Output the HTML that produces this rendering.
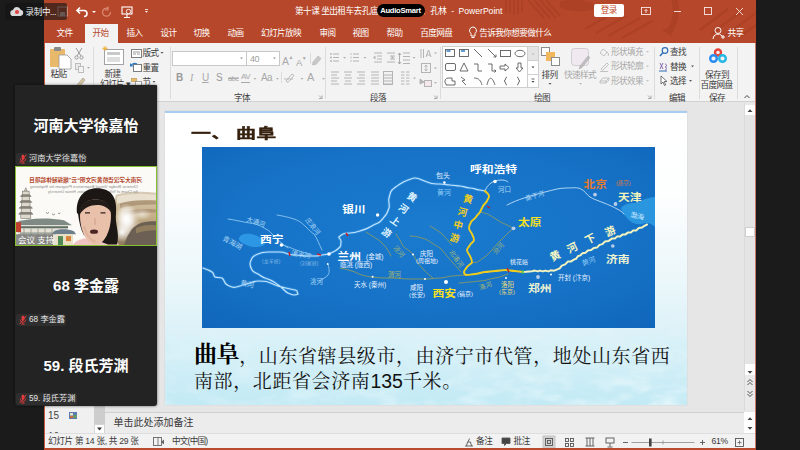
<!DOCTYPE html>
<html lang="zh"><head>
<meta charset="utf-8">
<title>PowerPoint</title>
<style>
*{margin:0;padding:0;box-sizing:border-box}
html,body{width:800px;height:450px;overflow:hidden;background:#1b1b1b;font-family:"Liberation Sans","Noto Sans CJK SC",sans-serif;}
.abs{position:absolute}
#stage{position:absolute;left:0;top:0;width:800px;height:450px;overflow:hidden;background:#1b1b1b}
#ppt{position:absolute;left:44px;top:0;width:712px;height:450px;background:#e6e6e6;overflow:hidden}
#titlebar{position:absolute;left:0;top:0;width:712px;height:43px;background:#b7472a}
.t{position:absolute;white-space:nowrap;line-height:1}
.tab{position:absolute;top:28px;color:#fff;font-size:8.6px;line-height:10px;letter-spacing:-.6px;white-space:nowrap;transform:translateX(-50%)}
#ribbon{position:absolute;left:0;top:43px;width:712px;height:59px;background:#f3f3f3;border-bottom:1px solid #d2d2d2}
.rl{position:absolute;font-size:8.6px;color:#3b3b3b;white-space:nowrap;line-height:10px;letter-spacing:-.6px}
.rl.g{color:#a9a9a9}
.sep{position:absolute;top:6px;width:1px;height:50px;background:#dadada}
#side{position:absolute;left:15px;top:85px;width:142px;height:321px;background:#232323;box-shadow:0 0 3px rgba(0,0,0,.6);border-radius:1px 1px 3px 3px;overflow:hidden}
.nm{position:absolute;left:0;width:142px;text-align:center;color:#fff;font-weight:bold;font-size:15px;line-height:18px;white-space:nowrap}
.lb{position:absolute;left:1px;height:12px;background:#2e2e2e;border-radius:2px;color:#e6e6e6;font-size:8.200px;line-height:12px;padding:0 2px 0 13px;white-space:nowrap}
</style>
</head>
<body>
<div id="stage">
<div id="ppt">
  <div id="titlebar">
    <!-- decorative pattern -->
    <svg class="abs" style="left:0;top:0" width="712" height="43" viewBox="44 0 712 43">
      <g stroke="#a23c22" fill="none" opacity=".5">
        <path d="M506 0v13M510 0v14M514 0v15M518 0v14M522 0v12" stroke-width="2"></path>
        <path d="M528 0l16 18M534 0l16 18M540 0l16 18M546 0l14 16" stroke-width="2.200"></path>
        <path d="M560 2c8-4 22-3 32 1c6 3 3 7-6 8s-22 0-26-4z" fill="#a23c22" stroke="none"></path>
        <path d="M672 -6A37 37 0 0 1 669 32" stroke-width="6"></path><path d="M662 30l9 6l3-10z" fill="#a23c22" stroke="none"></path>
        <path d="M585 29l26-15M596 33l30-17M608 36l32-18M622 38l30-17" stroke-width="2.400"></path>
        <path d="M700 30l28-21M711 34l32-24M723 37l33-24M738 38l18-13" stroke-width="2.400"></path>
      </g>
    </svg>
    <!-- quick access -->
    <svg class="abs" style="left:12px;top:5px" width="110" height="14" viewBox="0 0 110 14">
      <rect x="2" y="2" width="9" height="9" fill="none" stroke="#e9c4b8" stroke-width="1"></rect><rect x="4" y="7" width="5" height="4" fill="#e9c4b8"></rect>
      <path d="M22 4 L19 7 L22 10 M19 7 H26 a3 3 0 0 1 0 6" transform="translate(2 -1.500)" fill="none" stroke="#fff" stroke-width="1.6"></path>
      <path d="M36 6 l2 2 l2 -2z" fill="#fff"></path>
      <path d="M52 3.5 a4 4 0 1 0 2.5 3.5 M52 1.5 v3.5 h-3" fill="none" stroke="#d98a73" stroke-width="1.2"></path>
      <rect x="66" y="2" width="10" height="7" fill="none" stroke="#fff" stroke-width="1.1"></rect><path d="M71 9 v3 M68 12.5 h6" stroke="#fff" stroke-width="1.1"></path><circle cx="72.500" cy="6.500" r="2.200" fill="#b7472a" stroke="#fff" stroke-width=".9"></circle>
      <path d="M89 6 l1.500 1.800 l1.500 -1.800z" fill="#fff"></path><path d="M89 4.500h3" stroke="#fff" stroke-width=".8"></path>
    </svg>
    <div class="t" id="ttl" style="left: 251px; top: 6.5px; color: rgb(255, 255, 255); font-size: 8.6px; letter-spacing: -0.5px; right: auto; width: 112.39px;">第十课 坐出租车去孔庙、孔府</div>
    <div class="t" id="ttl2" style="right: auto; top: 6.5px; color: rgb(255, 255, 255); font-size: 8.6px; letter-spacing: -0.5px; word-spacing: 3px; left: 378.11px; width: 81.59px;">、孔林 - <span style="letter-spacing:0">PowerPoint</span></div>
    <div class="abs" style="left:332.500px;top:3.500px;width:48px;height:13.500px;background:#000;border-radius:7px;color:#fff;font-size:7.600px;font-weight:bold;line-height:13.500px;text-align:center;letter-spacing:-.25px">AudioSmart</div>
    <div class="abs" style="left: 549.5px; top: 4px; width: 30.5px; height: 13px; background: rgb(255, 255, 255); border-radius: 2px; color: rgb(192, 73, 44); font-size: 8.6px; letter-spacing: -0.5px; line-height: 13px; text-align: center; right: auto;">登录</div>
    <svg class="abs" style="left:594px;top:4px" width="112" height="14" viewBox="0 0 112 14">
      <g fill="none" stroke="#fff" stroke-width=".9" opacity=".88">
        <rect x="3.500" y="3.500" width="9" height="7"></rect><path d="M8 9V5.500M6.500 7L8 5.500L9.500 7"></path>
        <path d="M36 7.500h7"></path>
        <rect x="66.500" y="3.500" width="7" height="7"></rect>
        <path d="M98 4l7 7M105 4l-7 7"></path>
      </g>
    </svg>
    <!-- tabs -->
    <div class="abs" style="left:41px;top:24px;width:33px;height:19px;background:#f3f3f3"></div>
    <div class="tab" style="left: 12.58px; transform: none; width: 16.8px; right: auto;">文件</div>
    <div class="tab" style="left: 48.58px; color: rgb(183, 71, 42); transform: none; width: 16.8px; right: auto;">开始</div>
    <div class="tab" style="left: 82.58px; transform: none; width: 16.8px; right: auto;">插入</div>
    <div class="tab" style="left: 116.58px; transform: none; width: 16.8px; right: auto;">设计</div>
    <div class="tab" style="left: 149.58px; transform: none; width: 16.8px; right: auto;">切换</div>
    <div class="tab" style="left: 183.58px; transform: none; width: 16.8px; right: auto;">动画</div>
    <div class="tab" style="left: 216.98px; transform: none; width: 42.02px; right: auto;">幻灯片放映</div>
    <div class="tab" style="left: 275.58px; transform: none; width: 16.8px; right: auto;">审阅</div>
    <div class="tab" style="left: 308.58px; transform: none; width: 16.8px; right: auto;">视图</div>
    <div class="tab" style="left: 342.58px; transform: none; width: 16.8px; right: auto;">帮助</div>
    <div class="tab" style="left: 376.19px; transform: none; width: 33.61px; right: auto;">百度网盘</div>
    <svg class="abs" style="left:424px;top:26px" width="10" height="14" viewBox="0 0 10 14"><path d="M5 1a3.600 3.600 0 0 0-2 6.500V10h4V7.500A3.600 3.600 0 0 0 5 1zM3.500 11.500h3" fill="none" stroke="#fff" stroke-width="1"></path></svg>
    <div class="tab" style="left: 435.19px; transform: none; width: 75.61px; right: auto;">告诉我你想要做什么</div>
    <svg class="abs" style="left:668px;top:26px" width="13" height="14" viewBox="0 0 13 14"><circle cx="6" cy="4.500" r="3" fill="none" stroke="#fff" stroke-width="1"></circle><path d="M1 13a5 5 0 0 1 9-3M9 11h4M11 9v4" fill="none" stroke="#fff" stroke-width="1"></path></svg>
    <div class="tab" style="left: 683.58px; transform: none; width: 16.8px; right: auto;">共享</div>
  </div>
  <div id="ribbon"><div class="abs" style="left:-44px;top:-43px;width:800px;height:450px">
    <svg class="abs" style="left:44px;top:43px" width="712" height="59" viewBox="44 43 712 59">
      <!-- separators -->
      <g stroke="#dcdcdc" stroke-width="1"><path d="M93.500 47v52M170.500 47v52M325.500 47v52M440.500 47v52M654.500 47v52M699.500 47v52M737.500 47v52"></path></g>
      <!-- paste -->
      <rect x="50" y="49" width="15" height="18" rx="1" fill="#e8b96a"></rect><rect x="54" y="47" width="7" height="4" rx="1" fill="#8a8a8a"></rect>
      <path d="M59 55h8l4 4v10h-12z" fill="#fff" stroke="#9a9a9a" stroke-width=".8"></path>
      <!-- cut / copy / painter -->
      <g stroke="#9b9b9b" fill="none" stroke-width="1"><path d="M76 48l5 8M82 48l-5 8"></path><circle cx="76.500" cy="57.500" r="1.600"></circle><circle cx="81.500" cy="57.500" r="1.600"></circle>
      <rect x="75.500" y="63.500" width="5" height="6" fill="#e9e9e9" stroke="#bdbdbd"></rect><rect x="78.500" y="66.500" width="5" height="6" fill="#f3f3f3" stroke="#bdbdbd"></rect></g>
      <path d="M87 67l1.500 1.800l1.500-1.800z" fill="#aaa"></path>
      <path d="M83 78l-6 7l-1 3l3-1l6-7z" fill="#d9c79a" stroke="#9b9b9b" stroke-width=".7"></path>
      <!-- new slide -->
      <rect x="104.500" y="49.500" width="19" height="15" fill="#fff" stroke="#a2a2a2"></rect><rect x="107" y="52" width="13" height="3" fill="#c9c9c9"></rect><rect x="107" y="57" width="13" height="5" fill="#dedede"></rect>
      <path d="M105 46v5M102.500 48.500h5M103.200 46.700l3.600 3.600M106.800 46.700l-3.600 3.600" stroke="#f0b23a" stroke-width=".9"></path>
      <!-- layout, reset, section icons -->
      <rect x="131.500" y="49.500" width="10" height="8" fill="#fff" stroke="#7d7d7d"></rect><path d="M133 52h7M133 54h3M137 54h3" stroke="#9a9a9a" stroke-width="1"></path>
      <rect x="133.500" y="64.500" width="8" height="7" fill="#fff" stroke="#7d7d7d"></rect><path d="M131 66a4 4 0 0 1 6-2" fill="none" stroke="#2f7cc4" stroke-width="1.300"></path><path d="M130 63v3.500h3.500z" fill="#2f7cc4"></path>
      <rect x="131.500" y="78.500" width="5" height="3" fill="#e8b96a" stroke="#b98d3e" stroke-width=".6"></rect><rect x="135.500" y="81.500" width="6" height="4" fill="#fff" stroke="#8c8c8c" stroke-width=".8"></rect>
      <path d="M160.500 52l1.500 1.800l1.500-1.800zM152.500 81l1.500 1.800l1.500-1.800z" fill="#555"></path>
      <!-- font boxes -->
      <rect x="172.500" y="51.500" width="74" height="14" fill="#fff" stroke="#c8c8c8"></rect><rect x="246.500" y="51.500" width="33" height="14" fill="#fff" stroke="#c8c8c8"></rect>
      <path d="M240 57.500l1.500 1.800l1.500-1.800zM273 57.500l1.500 1.800l1.500-1.800z" fill="#9a9a9a"></path>
      <path d="M310.500 53v11M281.500 72v11" stroke="#dcdcdc"></path>
      <path d="M313 62l5-6l3 2.500l-5 6zM313 62l-.5 3l3-.5" fill="#c9c9c9" stroke="#b3b3b3" stroke-width=".6"></path>
      <path d="M253.500 78l1.500 1.800l1.500-1.800zM276 78l1.500 1.800l1.500-1.800zM300.500 78l1.500 1.800l1.500-1.800zM322 78l1.500 1.800l1.500-1.800z" fill="#b0b0b0"></path>
      <path d="M286 81l6-7l2 1.500l-6 7zM284 79l9 0" fill="none" stroke="#b5b5b5" stroke-width=".9"></path>
      <path d="M319 98.500h3v-3M322 98.500l-3-3M434 98.500h3v-3M437 98.500l-3-3M648 98.500h3v-3M651 98.500l-3-3" fill="none" stroke="#9a9a9a" stroke-width=".8"></path>
      <!-- paragraph icons -->
      <g stroke="#b4b4b4" stroke-width="1" fill="none">
        <path d="M333 54h6M333 57.500h6M333 61h6M353 54h6M353 57.500h6M353 61h6"></path>
        <path d="M374 53h8M377 56h5M377 59h5M374 62h8M387 53h8M390 56h5M390 59h5M387 62h8"></path>
        <path d="M403 53h7M403 56.500h7M403 60h7M403 63.500h7"></path>
        <path d="M331 72h8M331 75h6M331 78h8M331 81h6M331 84h8"></path>
        <path d="M344 72h8M345 75h6M344 78h8M345 81h6M344 84h8"></path>
        <path d="M357 72h8M359 75h6M357 78h8M359 81h6M357 84h8"></path>
        <path d="M371 72h8M371 75h8M371 78h8M371 81h8M371 84h8"></path>
        <path d="M384 75h8M384 78h8M384 81h8M384 84h8"></path><rect x="383.500" y="71.500" width="9" height="13"></rect>
        <path d="M401 72h3.500M401 75h3.500M401 78h3.500M401 81h3.500M401 84h3.500M406 72h3.500M406 75h3.500M406 78h3.500M406 81h3.500M406 84h3.500"></path>
        <path d="M421 49v9M423.500 49v9M426 57l2.500-7l2.500 7M427 55h3"></path>
        <rect x="421.500" y="63.500" width="9" height="9"></rect><path d="M426 65v6M424.500 66.500l1.500-1.500l1.500 1.500M424.500 69.500l1.500 1.500l1.500-1.500"></path>
        <rect x="424.500" y="80.500" width="7" height="6" fill="#f4e8ec"></rect><path d="M420 79l4 3l-4 2z" fill="#b4b4b4"></path>
      </g>
      <circle cx="331" cy="54" r=".9" fill="#b4b4b4"></circle><circle cx="331" cy="57.500" r=".9" fill="#b4b4b4"></circle><circle cx="331" cy="61" r=".9" fill="#b4b4b4"></circle>
      <path d="M351 53v2M351 56.500v2M351 60v2" stroke="#b4b4b4" stroke-width=".8"></path>
      <path d="M373 57.500l2.500-2v4zM394 57.500l-2.500-2v4z" fill="#b4b4b4"></path>
      <path d="M399.500 53v11M398 55l1.500-2l1.500 2M398 62l1.500 2l1.500-2" stroke="#9a9a9a" fill="none" stroke-width=".8"></path>
      <path d="M343 57l1.500 1.800l1.500-1.800zM363.500 57l1.500 1.800l1.500-1.800zM412.500 57l1.500 1.800l1.500-1.800zM413 77.500l1.500 1.800l1.500-1.800zM434 52.500l1.500 1.800l1.500-1.800zM434 67.500l1.500 1.800l1.500-1.800zM434 82l1.500 1.800l1.500-1.800z" fill="#b0b0b0"></path>
      <!-- shapes gallery -->
      <rect x="442.500" y="46.500" width="96" height="41" fill="#fff" stroke="#cfcfcf"></rect>
      <path d="M527.500 46.500v41M527.500 60.500h11M527.500 74.500h11" stroke="#cfcfcf" fill="none"></path><rect x="528" y="47" width="10" height="13" fill="#e4e4e4"></rect>
      <path d="M531.500 54.500l1.500-1.800l1.500 1.800z" fill="#bdbdbd"></path><path d="M531.500 66.500l1.500 1.800l1.500-1.800zM531.500 81l1.500 1.800l1.500-1.800z" fill="#444"></path><path d="M531.500 79h3" stroke="#444" stroke-width=".8"></path>
      <g stroke="#5c5c5c" stroke-width=".9" fill="none">
        <rect x="445.500" y="49.500" width="9" height="7"></rect><rect x="459.500" y="49.500" width="9" height="7"></rect>
        <path d="M474 49l8 8M488 49l8 8M496 57v-2.500M496 57h-2.500"></path>
        <rect x="500.500" y="50.500" width="10" height="6"></rect><ellipse cx="520" cy="53.500" rx="5" ry="3.200"></ellipse>
        <rect x="445.500" y="63.500" width="10" height="7" rx="1.500"></rect><path d="M464 63l4 8h-8z"></path>
        <path d="M474 64h4v7h4M488 64h4v7h4M494.500 69.500l1.500 1.500l-1.500 1.500"></path>
        <path d="M500 66h5v-2l4 3.500l-4 3.500v-2h-5zM518 63v5h-2l3.500 4l3.500-4h-2v-5z"></path>
        <path d="M446 84a3.500 3.500 0 0 1 3-6h3v3h3v4h-9z"></path><path d="M461 77l4 3l-3 1l4 4M474 78c5 0 7 3 8 7M487 85c2-9 5-9 8 0"></path>
        <path d="M507 77c-2 0-1 4-3 4c2 0 1 4 3 4M517 77c2 0 1 4 3 4c-2 0-1 4-3 4"></path>
      </g>
      <path d="M446.500 51h4M461 51h4" stroke="#2f7cc4" stroke-width="1.600"></path>
      <!-- arrange -->
      <rect x="541.500" y="47.500" width="8" height="8" fill="#fff" stroke="#8c8c8c"></rect><rect x="546" y="52" width="9" height="9" fill="#f2b85c"></rect><rect x="551.500" y="57.500" width="8" height="8" fill="#fff" stroke="#8c8c8c"></rect>
      <path d="M548.500 83l1.500 1.800l1.500-1.800z" fill="#555"></path><path d="M579 83l1.500 1.800l1.500-1.800z" fill="#b8b8b8"></path>
      <!-- quick styles -->
      <rect x="571.500" y="48.500" width="17" height="17" rx="3" fill="#f1e9f0" stroke="#d2ccd2"></rect><path d="M580 66l8-10l2 1.500l-8 10zM580 66l-1 3l3-1.500" fill="#bdbdbd" stroke="#aaa" stroke-width=".5"></path>
      <!-- shape fill/outline/effects icons -->
      <g stroke="#bcbcbc" fill="none" stroke-width=".9"><path d="M603 49l4 3l-3 4l-4-3zM607 52c1.500 1 2 3 1 4"></path><path d="M601 69l6-6l1.500 1.500l-6 6zM600 71.500h8"></path><path d="M600 81l3-3h6l-3 3zM600 81v2h6v-2M606 83l3-3v-2"></path></g>
      <path d="M646 51l1.500 1.800l1.500-1.800zM646 65.500l1.500 1.800l1.500-1.800zM646 80l1.500 1.800l1.500-1.800z" fill="#c4c4c4"></path>
      <!-- editing icons -->
      <circle cx="665" cy="50.500" r="2.800" fill="none" stroke="#2f6eb5" stroke-width="1.200"></circle><path d="M663 52.500l-3 3.500" stroke="#2f6eb5" stroke-width="1.400"></path>
      <path d="M660 63l3 6M663 63l-3 6M665 64c2 0 2 3 0 3c2 0 2 3 0 3" stroke="#7a5aa8" stroke-width=".9" fill="none"></path><path d="M659 71h8" stroke="#2f6eb5" stroke-width="1"></path>
      <path d="M661 76v8l2-2l1.500 3.500l1.200-.5l-1.500-3.500h2.800z" fill="#fff" stroke="#555" stroke-width=".8"></path>
      <path d="M691 65.500l1.500 1.800l1.500-1.800zM689 80l1.500 1.800l1.500-1.800z" fill="#555"></path>
      <!-- baidu cloud -->
      <g fill="none" stroke-width="2.400"><circle cx="718" cy="52.500" r="3" stroke="#e8453c"></circle><circle cx="713.500" cy="58.500" r="3.300" stroke="#2a8bf2"></circle><circle cx="722.500" cy="58.500" r="3.300" stroke="#23b7e5"></circle></g>
      <path d="M744.500 98l2.500-2.500l2.500 2.500" fill="none" stroke="#444" stroke-width="1"></path>
    </svg>
    <div class="rl" style="left: 50.5px; top: 69px; right: auto; width: 16.81px;">粘贴</div>
    <div class="rl" style="left: 104.5px; top: 69px; right: auto; width: 16.81px;">新建</div>
    <div class="rl" style="left: 100px; top: 79px; right: auto; width: 31.39px;">幻灯片 ▾</div>
    <div class="rl" style="left: 142.5px; top: 48px; right: auto; width: 16.81px;">版式</div>
    <div class="rl" style="left: 142.5px; top: 62.5px; right: auto; width: 16.81px;">重置</div>
    <div class="rl" style="left: 142.5px; top: 77px; right: auto; width: 8.41px;">节</div>
    <div class="rl" style="left:250px;top:53.500px;color:#a0a0a0;font-size:9px">40</div>
    <div class="rl g" style="left:282px;top:50.500px;font-size:10.500px;line-height:12px">A<span style="font-size:5px;vertical-align:6px">▲</span></div>
    <div class="rl g" style="left:296px;top:51.500px;font-size:9.500px;line-height:12px">A<span style="font-size:5px;vertical-align:6px">▼</span></div>
    <div class="rl g" style="left:176px;top:72px;font-size:10px;line-height:12px;font-weight:bold;color:#9a9a9a">B</div>
    <div class="rl g" style="left:190px;top:72px;font-size:10px;line-height:12px;font-style:italic;font-family:'Liberation Serif',serif">I</div>
    <div class="rl g" style="left:202px;top:72px;font-size:10px;line-height:12px;text-decoration:underline">U</div>
    <div class="rl g" style="left:216px;top:72px;font-size:10px;line-height:12px;color:#9a9a9a">S</div>
    <div class="rl g" style="left:228px;top:74px;font-size:7.500px;line-height:10px;text-decoration:line-through">abc</div>
    <div class="rl g" style="left:241px;top:72px;font-size:8px;line-height:10px;border-bottom:1px solid #a9a9a9">AV</div>
    <div class="rl g" style="left:261px;top:72px;font-size:10px;line-height:12px">Aa</div>
    <div class="rl g" style="left:307px;top:71px;font-size:11px;line-height:13px">A</div>
    <div class="rl" style="left: 234px; top: 93px; right: auto; width: 16.81px;">字体</div>
    <div class="rl" style="left: 370px; top: 93px; right: auto; width: 16.81px;">段落</div>
    <div class="rl" style="left: 534px; top: 93px; right: auto; width: 16.81px;">绘图</div>
    <div class="rl" style="left: 669px; top: 93px; right: auto; width: 16.81px;">编辑</div>
    <div class="rl" style="left: 709px; top: 93px; right: auto; width: 16.81px;">保存</div>
    <div class="rl" style="left: 541.5px; top: 69.5px; right: auto; width: 16.81px;">排列</div>
    <div class="rl g" style="left: 564px; top: 69.5px; right: auto; width: 33.61px;">快速样式</div>
    <div class="rl g" style="left: 611px; top: 46.5px; right: auto; width: 33.61px;">形状填充</div>
    <div class="rl g" style="left: 611px; top: 61px; right: auto; width: 33.61px;">形状轮廓</div>
    <div class="rl g" style="left: 611px; top: 75.5px; right: auto; width: 33.61px;">形状效果</div>
    <div class="rl" style="left: 670px; top: 47px; right: auto; width: 16.81px;">查找</div>
    <div class="rl" style="left: 670px; top: 61.5px; right: auto; width: 16.81px;">替换</div>
    <div class="rl" style="left: 670px; top: 75.5px; right: auto; width: 16.81px;">选择</div>
    <div class="rl" style="left: 705px; top: 69.5px; right: auto; width: 25.2px;">保存到</div>
    <div class="rl" style="left: 700.5px; top: 80px; right: auto; width: 33.61px;">百度网盘</div>
  </div></div>
  <!-- SLIDE -->
  <div id="slide" class="abs" style="left:121px;top:111px;width:522px;height:294px;background:linear-gradient(#ffffff 0,#fdfefe 28%,#ebf7fa 58%,#d3eff7 84%,#c2eaf5 100%);border-top:2px solid #a9cdf0;box-shadow:0 0 1px #bbb;overflow:hidden">
  <div class="abs" style="left:-165px;top:-113px;width:800px;height:450px">
    <!-- wave texture -->
    <svg class="abs" style="left:165px;top:300px" width="523" height="105" viewBox="165 300 523 105">
      <defs>
        <filter id="tx" x="0" y="0" width="100%" height="100%"><feTurbulence type="fractalNoise" baseFrequency=".035 .08" numOctaves="3" seed="7" result="n"></feTurbulence><feColorMatrix in="n" type="matrix" values="0 0 0 0 1  0 0 0 0 1  0 0 0 0 1  2.600 0 0 0 -1.050"></feColorMatrix></filter>
        <linearGradient id="wf2" x1="0" y1="0" x2="0" y2="1"><stop offset="0" stop-color="#000"></stop><stop offset=".35" stop-color="#555"></stop><stop offset="1" stop-color="#fff"></stop></linearGradient>
        <linearGradient id="wf3" x1="0" y1="0" x2="1" y2="0"><stop offset="0" stop-color="#777"></stop><stop offset=".6" stop-color="#aaa"></stop><stop offset="1" stop-color="#fff"></stop></linearGradient>
        <mask id="wm"><rect x="165" y="300" width="523" height="105" fill="url(#wf2)"></rect></mask>
        <mask id="wm2"><rect x="165" y="300" width="523" height="105" fill="url(#wf3)"></rect></mask>
      </defs>
      <g mask="url(#wm2)"><rect x="165" y="300" width="523" height="105" filter="url(#tx)" mask="url(#wm)" opacity=".55"></rect></g>
    </svg>
    <div class="t" id="stitle" style="left: 191px; top: 122px; font-family: &quot;Liberation Sans&quot;, &quot;Noto Sans CJK SC&quot;, sans-serif; font-weight: bold; font-size: 20px; line-height: 22px; color: rgb(54, 33, 15); -webkit-text-stroke: 0.5px rgb(54, 33, 15); letter-spacing: 0.3px; transform: scaleY(0.68); transform-origin: 50% 52%;">一、<span style="margin-left:4.400px">曲阜</span></div>
    <svg class="abs" id="map" style="left:202px;top:147px" width="453" height="181" viewBox="202 147 453 181">
      <defs>
        <radialGradient id="mg" cx=".5" cy=".45" r=".75"><stop offset="0" stop-color="#1a7bcf"></stop><stop offset=".6" stop-color="#1672c6"></stop><stop offset="1" stop-color="#1066ba"></stop></radialGradient>
      </defs>
      <rect x="202" y="147" width="453" height="181" fill="url(#mg)"></rect>
      <!-- bohai + qinghai lake -->
      <path d="M621 208c3-4 8-5 14-5c5-1 9-5 20-6v30c-4-4-8-5-13-3c-6 1-11-1-15-6c-3-3-5-6-6-10z" fill="#2a96e0"></path>
      <path d="M239 238c2-5 10-5 16-3s11 6 10 9s-11 4-16 2s-11-4-10-8z" fill="#2c97e4"></path>
      <!-- thin rivers -->
      <g fill="none" stroke="#9bd0f6" stroke-width=".8" stroke-linecap="round" stroke-linejoin="round">
        <path d="M228 219c8 1 14 3 22 4s12 4 16 6s5 4 8 7s8 8 14 12"></path>
        <path d="M277 215c6 1 11 2 17 4s9 5 12 8s6 6 8 7c3 4 5 10 8 16"></path>
        <path d="M282 245c5 1 9 3 14 5s11 3 16 5"></path>
        <path d="M328 264c1 4 2 8 0 11s-6 4-9 6"></path>
        <path d="M507 205c6-3 11-5 17-7s13-4 21-6s14-4 21-4s11-1 15 1s6 6 9 8s9 4 14 6s10 4 13 6c3 1 5 3 7 5" stroke="#d4ecff"></path>
        <path d="M485 191c1-3 3-6 6-8s6-3 11-3c3 0 5 1 6 2" stroke="#d4ecff"></path>
      </g>
      <g fill="none" stroke="#8a9a62" stroke-width=".9" stroke-linecap="round" stroke-linejoin="round">
        <path d="M340 268c5 1 8 2 12 3s6 3 10 4s7 2 10 2c8 1 12 1 18 1s14 1 20 1s11 0 16 0s10-1 14-1s9-2 12-2s9-1 14-1"></path>
        <path d="M396 234c1 3 3 4 4 6s2 5 4 7s6 4 8 6s3 5 4 7s5 7 8 10s6 6 9 8"></path>
        <path d="M410 236c5 0 8 1 12 2s7 3 10 5s6 4 8 5s4 5 7 8s4 5 7 8s5 6 7 8"></path>
        <path d="M514 228c-2 2-4 3-6 5s-3 3-5 5s-4 4-6 6s-3 4-5 6s-4 4-6 6s-5 3-7 5s-4 1-7 2"></path>
        <path d="M459 283c4 0 7-1 11-1s7-1 10-1s7-1 10-2s7-1 10-2s5-2 8-3"></path>
        <path d="M481 212c4 1 7 2 10 4s5 3 8 5s6 3 8 4s4 2 6 3"></path>
        <path d="M430 226c5 3 9 5 13 9s6 7 9 10"></path>
        <path d="M366 232c6 4 12 7 16 11s7 8 9 13"></path>
      </g>
      <!-- Yellow river upper -->
      <path d="M203 268c3 1 6 2 9 4s1 4 3 5s5 0 7 1s2 4 4 6s4 2 6 3s5 0 8-1s7-2 10-3s5-2 8-2s7 0 10 1s7 3 10 4s8 2 12 3s7 1 7 2s1 3 1 3s-2 1-4 1s-4-1-6-2s-4-3-6-5s-5-4-8-6s-6-3-9-4s-5-3-7-4s-5-2-6-4s-2-4-2-6s1-4 2-6s4-3 6-4s6-2 10-2s8 0 12 0s5 1 8 2s5 1 8 1s7 1 10 1s7 0 10 0s4-1 6-1l7-1c2-1 4-2 6-3s4-3 5-4s1-4 1-6s-3-3-2-4s2-2 4-3s5-1 7-1s7-1 10-2s7-2 10-4s5-3 8-4s5-5 7-7s3-5 4-8s-1-7 0-10s1-6 3-8s5-4 8-6s5-3 8-4s5-2 7-2s5 1 7 2s5 2 8 3s7 1 10 1s7 1 10 1s7 1 10 1s6 2 10 2s7 2 10 2l5 1" fill="none" stroke="#4fa8ee" stroke-width="3" opacity=".35" stroke-linecap="round" stroke-linejoin="round"></path>
      <path d="M203 268c3 1 6 2 9 4s1 4 3 5s5 0 7 1s2 4 4 6s4 2 6 3s5 0 8-1s7-2 10-3s5-2 8-2s7 0 10 1s7 3 10 4s8 2 12 3s7 1 7 2s1 3 1 3s-2 1-4 1s-4-1-6-2s-4-3-6-5s-5-4-8-6s-6-3-9-4s-5-3-7-4s-5-2-6-4s-2-4-2-6s1-4 2-6s4-3 6-4s6-2 10-2s8 0 12 0s5 1 8 2s5 1 8 1s7 1 10 1s7 0 10 0s4-1 6-1l7-1c2-1 4-2 6-3s4-3 5-4s1-4 1-6s-3-3-2-4s2-2 4-3s5-1 7-1s7-1 10-2s7-2 10-4s5-3 8-4s5-5 7-7s3-5 4-8s-1-7 0-10s1-6 3-8s5-4 8-6s5-3 8-4s5-2 7-2s5 1 7 2s5 2 8 3s7 1 10 1s7 1 10 1s7 1 10 1s6 2 10 2s7 2 10 2l5 1" fill="none" stroke="#c2e6ff" stroke-width="1.150" stroke-linecap="round" stroke-linejoin="round"></path>
      <!-- middle (yellow) -->
      <path d="M485 191c2 2 4 3 4 5s-1 3-2 5s-3 3-4 5s-2 4-3 6s-3 3-4 5s-4 3-5 5s-2 4-2 6s2 4 3 6s2 4 2 6s-3 3-4 5s-3 3-3 5s2 4 3 6s2 4 2 6s-4 3-5 5s-3 3-3 5s1 3 3 3s5-1 8-1s7-2 10-2s7-1 10-1s7-1 10-1s7 1 10 1l8 1" fill="none" stroke="#f0cc1c" stroke-width="1.900" stroke-linecap="round" stroke-linejoin="round"></path>
      <!-- lower -->
      <path d="M523.0 272.0 L526.0 271.8 L529.0 271.5 L532.0 271.2 L534.8 270.6 L537.8 271.4 L540.0 270.6 L543.0 271.4 L545.2 270.6 L548.2 271.4 L550.8 270.3 L554.2 270.7 L556.8 269.6 L559.7 268.4 L561.8 265.6 L565.2 264.4 L567.8 261.6 L571.2 261.4 L573.8 259.6 L576.2 258.7 L577.8 256.3 L580.2 255.4 L582.5 253.3 L585.5 252.7 L587.8 250.6 L591.2 250.1 L593.8 247.9 L597.2 247.4 L599.5 244.9 L602.5 244.1 L604.8 241.6 L608.7 240.9 L611.8 238.6 L614.9 238.4 L617.1 236.6 L620.2 236.4 L622.5 234.6 L625.5 234.4 L627.8 232.6 L630.9 232.4 L633.1 230.6 L636.2 230.4 L638.8 228.1 L642.2 227.4 L644.5 225.8 L647.0 224.5" fill="none" stroke="#f3f3c0" stroke-width="2" stroke-linecap="round" stroke-linejoin="round"></path>
      <!-- marks -->
      <g stroke-width="1.500" stroke="#c0202a"><path d="M289 252l1 4M317 254l4 1M346 233l2 3M487 206l3 2M507 268l2 4"></path><path d="M523 270v4" stroke="#2fb85a"></path></g>
      <!-- city dots -->
      <g fill="#ffffff"><circle cx="281.500" cy="245" r="1.800"></circle><circle cx="329" cy="254" r="1.800"></circle><circle cx="377.600" cy="215" r="1.700"></circle><circle cx="444.400" cy="182.600" r="1.300"></circle><circle cx="495" cy="181.500" r="1.800"></circle><circle cx="446" cy="282" r="2"></circle><circle cx="413" cy="254.600" r="1"></circle><circle cx="372.600" cy="276.700" r="1"></circle><circle cx="425" cy="279" r="1"></circle><circle cx="327.700" cy="264" r=".9"></circle><circle cx="551" cy="274.600" r="1"></circle><circle cx="506" cy="278" r="1"></circle></g>
      <g fill="#b9cdea"><circle cx="595" cy="194.600" r="1.900"></circle><circle cx="615.500" cy="204" r="1.900"></circle><circle cx="513.500" cy="228.300" r="1.900"></circle><circle cx="612.800" cy="246" r="1.800"></circle><circle cx="538" cy="277" r="1.900"></circle></g>
      <!-- big labels -->
      <g font-family="Liberation Sans, Noto Sans CJK SC, sans-serif" font-weight="bold" font-size="11.800" fill="#fff" transform="scale(1 0.82)">
        <text x="342" y="259.8">银川</text><text x="260" y="296.3">西宁</text><text x="337.500" y="317.1">兰州</text><text x="470" y="211.0">呼和浩特</text>
        <text x="583.500" y="228.7" fill="#e87a2c">北京</text><text x="618" y="245.7" fill="#f4f4ba">天津</text><text x="518" y="275.6" fill="#f5e024">太原</text>
        <text x="606" y="321.3" fill="#eef3d2">济南</text><text x="528" y="356.1" fill="#eef3d2">郑州</text><text x="432.500" y="362.2" fill="#f5e024">西安</text>
      </g>
      <g font-family="Liberation Sans, Noto Sans CJK SC, sans-serif" font-weight="bold" font-size="9.500">
        <g fill="#dff3ff"><text x="407.500" y="200.500" transform="rotate(35 412 197)">黄</text><text x="399" y="212" transform="rotate(35 403.500 208.500)">河</text><text x="390.500" y="224.500" transform="rotate(35 395 221)">上</text><text x="382" y="236" transform="rotate(35 386.500 232.500)">游</text></g>
        <g fill="#f2cf1e"><text x="463.500" y="202.500" transform="rotate(14 468 199)">黄</text><text x="458" y="215.500" transform="rotate(14 462.500 212)">河</text><text x="453.500" y="228.500" transform="rotate(14 458 225)">中</text><text x="450" y="241.500" transform="rotate(14 454.500 238)">游</text></g>
        <g fill="#f6f6c4" font-size="10.500"><text x="550" y="259.500" transform="rotate(-27 555 256)">黄</text><text x="567" y="251.500" transform="rotate(-27 572 248)">河</text><text x="585" y="242.500" transform="rotate(-27 590 239)">下</text><text x="605" y="235" transform="rotate(-27 610 231.500)">游</text></g>
      </g>
      <!-- small labels -->
      <g font-family="Liberation Sans, Noto Sans CJK SC, sans-serif" font-size="6.500" fill="#e8f2ff">
        <text x="436" y="178" font-size="7">包头</text><text x="437" y="195" font-size="7" fill="#8fcdf8">黄河</text><text x="498" y="192" fill="#a8d4f6">河口</text>
        <text x="526" y="201" transform="rotate(-17 526 201)" fill="#a8d4f6">桑干河</text><text x="630" y="217" font-size="7" fill="#cfeaff" transform="rotate(12 630 217)">渤海</text>
        <text x="616" y="185" fill="#e87a2c" font-size="5.500">(燕京)</text>
        <text x="366" y="258.500">(金城)</text><text x="340" y="267">临洮 (陇西)</text><text x="354" y="287">天水 (秦州)</text>
        <text x="420" y="256">庆阳</text><text x="416" y="263" font-size="6">(周祖地)</text><text x="410" y="290">咸阳</text><text x="409" y="297" font-size="6">(长安)</text><text x="457" y="296" font-size="6">(镐京)</text>
        <text x="558" y="279.500">开封 (汴京)</text><text x="501" y="287" fill="#e8dc7a">洛阳</text><text x="499" y="294" font-size="6" fill="#e8dc7a">(东京)</text><text x="510" y="264" font-size="6">桃花峪</text>
        <text x="583" y="266" transform="rotate(-20 583 266)" fill="#8fcdf8" font-size="7">黄河</text>
        <text x="222" y="240" transform="rotate(28 222 240)" fill="#a8d4f6" font-size="7">青海湖</text><text x="240" y="285" transform="rotate(12 240 285)" fill="#a8d4f6" font-size="7">黄河</text>
        <text x="246" y="221" transform="rotate(18 246 221)" fill="#a8d4f6">大通河</text><text x="305" y="220" transform="rotate(52 305 220)" fill="#a8d4f6">庄浪河</text><text x="291" y="255" transform="rotate(10 291 255)" fill="#a8d4f6">湟水河</text>
        <text x="310" y="284" fill="#a8d4f6">洮河</text><text x="388" y="277" fill="#a9b870">渭河</text><text x="393" y="248" transform="rotate(50 393 248)" fill="#a9b870">泾河</text><text x="449" y="252" transform="rotate(55 449 252)" fill="#a9b870">北洛河</text>
        <text x="496" y="255" transform="rotate(-50 496 255)" fill="#a9b870">汾河</text><text x="480" y="290" transform="rotate(-18 480 290)" fill="#a9b870">洛河</text>
        <text x="262" y="263" font-size="5" fill="#7fb6e6">(龙羊峡)</text><text x="300" y="265" font-size="5" fill="#7fb6e6">(刘家峡)</text>
      </g>
    </svg>
    <div class="t kai" id="l1" style="left: 194px; top: 345px; font-family: &quot;Liberation Serif&quot;, &quot;Noto Serif CJK SC&quot;, serif; font-size: 19px; line-height: 22px; color: rgb(20, 20, 20); letter-spacing: 0.6px; right: auto; width: 476.41px;"><b style="font-size:23px;letter-spacing:-.4px;color:#000;position:relative;top:-1px">曲阜</b>，山东省辖县级市，由济宁市代管，地处山东省西</div>
    <div class="t kai" id="l2" style="left: 194px; top: 370px; font-family: &quot;Liberation Serif&quot;, &quot;Noto Serif CJK SC&quot;, serif; font-size: 19px; line-height: 22px; color: rgb(20, 20, 20); letter-spacing: 0.6px; right: auto; width: 267.77px;">南部，北距省会济南<span style="font-family:'Liberation Sans',sans-serif;font-size:19.500px;letter-spacing:0;color:#111">135</span>千米。</div>
  </div>
  </div>
  <!-- editing area scrollbar -->
  <div class="abs" style="left:700px;top:103px;width:11px;height:308px;background:#e9e9e9;border-left:1px solid #dadada"></div>
  <div class="abs" style="left:701px;top:105px;width:10px;height:10px;background:#fff"></div>
  <div class="abs" style="left:701px;top:115px;width:10px;height:249px;background:#e4e4e4"></div>
  <div class="abs" style="left:701px;top:227px;width:10px;height:10px;background:#fff;border:1px solid #cfcfcf"></div>
  <div class="abs" style="left:701px;top:364px;width:10px;height:11px;background:#fff"></div>
  <svg class="abs" style="left:701px;top:103px" width="10" height="308" viewBox="0 0 10 308"><path d="M2.500 9L5 6.200L7.500 9z" fill="#444"></path><path d="M2.500 268L5 270.800L7.500 268z" fill="#444"></path><path d="M2.500 279l2.500-2.500l2.500 2.500M2.500 282l2.500-2.500l2.500 2.500M2.500 288l2.500 2.500l2.500-2.500M2.500 291l2.500 2.500l2.500-2.500" fill="none" stroke="#444" stroke-width=".9"></path></svg>
  <!-- notes -->
  <div class="abs" style="left:0;top:412px;width:712px;height:22px;background:#ececec;border-top:1px solid #d0d0d0"></div>
  <div class="t" style="left: 69.5px; top: 418px; font-size: 10px; color: rgb(56, 56, 56); right: auto; width: 80px;">单击此处添加备注</div>
  <div class="abs" style="left:700px;top:412px;width:11px;height:21px;background:#fff"></div>
  <svg class="abs" style="left:701px;top:412px" width="10" height="21" viewBox="0 0 10 21"><path d="M2.500 8L5 5.200L7.500 8zM2.500 15L5 17.800L7.500 15z" fill="#444"></path></svg>
  <!-- thumbnail pane remnants -->
  <div class="abs" style="left:0;top:103px;width:61px;height:331px;background:#e6e6e6"></div>
  <div class="abs" style="left:0;top:405px;width:50px;height:29px;background:#f0f0f0"></div>
  <div class="abs" style="left:50px;top:405px;width:11px;height:19px;background:#cdcdcd"></div>
  <div class="abs" style="left:50px;top:424px;width:11px;height:10px;background:#fff;border:1px solid #d5d5d5"></div>
  <svg class="abs" style="left:50px;top:424px" width="11" height="10" viewBox="0 0 11 10"><path d="M3 3.500L5.500 6.500L8 3.500z" fill="#333"></path></svg>
  <div class="abs" style="left:61px;top:405px;width:52px;height:7px;background:#e6e6e6"></div>
  <div class="t" style="left:4px;top:411px;font-size:10px;color:#444">15</div>
  <div class="t" style="left:4px;top:431.500px;font-size:10px;color:#444">16</div>
  <svg class="abs" style="left:25px;top:412px" width="8" height="7" viewBox="0 0 8 7"><rect width="8" height="7" fill="#5a7bb0"></rect><rect x="1" y="1" width="3" height="2.500" fill="#e9e3c8"></rect><rect x="4.500" y="3" width="3" height="3" fill="#6aa05a"></rect><rect x="1" y="4" width="3" height="2" fill="#d06a3a"></rect></svg>
  <!-- status bar -->
  <div class="abs" style="left:0;top:433px;width:712px;height:17px;background:#f2f2f2;border-top:1px solid #dedede"></div>
  <div class="t" style="left: 4px; top: 437px; font-size: 8.6px; letter-spacing: -0.3px; color: rgb(58, 58, 58); right: auto; width: 93.44px;" id="st1">幻灯片 第 14 张, 共 29 张</div>
  <svg class="abs" style="left:109px;top:436px" width="12" height="11" viewBox="0 0 12 11"><rect x=".5" y="1.500" width="8" height="8" fill="none" stroke="#666" stroke-width=".9"></rect><path d="M5 1.500v8" stroke="#666" stroke-width=".8"></path><path d="M8 6l3-2.500v5z" fill="#666"></path></svg>
  <div class="t" style="left: 128px; top: 437px; font-size: 8.6px; letter-spacing: -0.8px; color: rgb(58, 58, 58); right: auto; width: 36.94px;">中文(中国)</div>
  <svg class="abs" style="left:416px;top:435px" width="296" height="14" viewBox="460 435 296 14">
    <rect x="543" y="436" width="12" height="12" fill="#d2d2d2" stroke="#bdbdbd" stroke-width=".8"></rect>
    <g fill="none" stroke="#555" stroke-width=".9">
      <path d="M465 446h8M466.500 446l1-4h3l1 4M468 442l1.500-3.500"></path>
      <path d="M502 438h8v5.500h-3.500l-2 2v-2h-2.500z" fill="#444"></path>
      <rect x="545.500" y="438.500" width="7" height="7"></rect><rect x="547.500" y="440.500" width="3" height="3"></rect>
      <rect x="565.500" y="438.500" width="3" height="3"></rect><rect x="570.500" y="438.500" width="3" height="3"></rect><rect x="565.500" y="443.500" width="3" height="3"></rect><rect x="570.500" y="443.500" width="3" height="3"></rect>
      <path d="M587 438v8M590 438v8M593 438v8M585.500 438h9M585.500 446h9"></path>
      <rect x="606" y="438" width="8" height="5"></rect><path d="M610 443v3.500M607.500 447h5"></path>
      <path d="M623 442.500h5M700 442.500h5M702.500 440v5"></path>
    </g>
    <path d="M631.500 442.500h63" stroke="#8a8a8a" stroke-width=".8"></path><path d="M663 440.500v4" stroke="#8a8a8a" stroke-width=".8"></path><rect x="649" y="438.500" width="2.600" height="8" fill="#444"></rect>
    <g fill="none" stroke="#555" stroke-width=".9"><rect x="735.500" y="438.500" width="8" height="8"></rect><path d="M737.500 442.500h4M739.500 440.500v4" stroke-width=".7"></path></g>
  </svg>
  <div class="t" style="left: 432px; top: 437px; font-size: 8.6px; letter-spacing: -0.3px; color: rgb(58, 58, 58); right: auto; width: 17.41px;">备注</div>
  <div class="t" style="left: 469.5px; top: 437px; font-size: 8.6px; letter-spacing: -0.3px; color: rgb(58, 58, 58); right: auto; width: 17.41px;">批注</div>
  <div class="t" style="left:667.500px;top:437px;font-size:8.600px;letter-spacing:-.3px;color:#3a3a3a">61%</div>
  <!-- window border -->
  <div class="abs" style="left:0;top:43px;width:1px;height:407px;background:#c45a3e"></div>
  <div class="abs" style="left:711px;top:43px;width:1px;height:407px;background:#c97a66"></div>
  <div class="abs" style="left:0;top:448px;width:712px;height:2px;background:#bb4b2e"></div>
</div>
<div id="side">
  <div class="nm" style="top: 32px; right: auto; left: 0px; width: 142px;">河南大学徐嘉怡</div>
  <div class="lb" style="top: 68px; right: auto; left: 1px; width: 71px;"><svg class="abs" style="left:2px;top:1px" width="10" height="10" viewBox="0 0 10 10"><rect x="3.600" y=".8" width="2.800" height="5" rx="1.400" fill="#e23b3b"></rect><path d="M2.200 4.500a2.800 2.800 0 0 0 5.600 0M5 7.300v1.700M3.300 9.200h3.400" fill="none" stroke="#e23b3b" stroke-width=".8"></path><path d="M8.300 .8L1.700 9" stroke="#e23b3b" stroke-width="1"></path></svg>河南大学徐嘉怡</div>
  <svg class="abs" style="left:0;top:80.500px" width="142" height="80" viewBox="15 165 142 81" preserveAspectRatio="none">
    <defs>
      <linearGradient id="wfl" x1="0" y1="0" x2="0" y2="1"><stop offset="0" stop-color="#d9cdb8"></stop><stop offset=".45" stop-color="#c7b08a"></stop><stop offset="1" stop-color="#8f7a5e"></stop></linearGradient>
      <radialGradient id="mist" cx=".5" cy=".5" r=".5"><stop offset="0" stop-color="#fff" stop-opacity=".95"></stop><stop offset="1" stop-color="#fff" stop-opacity="0"></stop></radialGradient>
    </defs>
    <rect x="15" y="165" width="142" height="81" fill="#86c030"></rect>
    <rect x="16" y="166" width="140" height="79" fill="#fbfaf6"></rect>
    <!-- waterfall right -->
    <path d="M116 194c10-3 24-4 40-2v53h-42c1-8-1-18 0-28s0-17 2-23z" fill="url(#wfl)"></path>
    <path d="M117 196c10-3 24-3 39-2v6c-14-1-28 0-39 3z" fill="#e9e0cf"></path>
    <path d="M120 203c9-3 22-4 36-3v4c-13 0-26 1-36 4zM124 211c9-2 20-3 32-2v3c-12 0-22 1-32 3z" fill="#a58c6e" opacity=".75"></path>
    <ellipse cx="127" cy="220" rx="13" ry="17" fill="url(#mist)"></ellipse><ellipse cx="126" cy="218" rx="10" ry="15" fill="url(#mist)"></ellipse><ellipse cx="122" cy="232" rx="10" ry="10" fill="url(#mist)"></ellipse><ellipse cx="142" cy="214" rx="10" ry="6" fill="url(#mist)" opacity=".6"></ellipse>
    <path d="M130 232c4-8 14-12 26-11v24h-32c2-5 3-9 6-13z" fill="#6b6053"></path>
    <path d="M136 228c5-3 12-4 20-3v5c-8 0-14 1-20 3z" fill="#9a8560" opacity=".8"></path>
    <!-- mirrored banner text -->
    <g transform="translate(172 0) scale(-1 1)">
    <text x="30" y="181.300" font-family="Liberation Sans, Noto Sans CJK SC, sans-serif" font-weight="bold" font-size="5.650" fill="#b4482e">河南大学汉语桥黄河文明“云”端探秘体验项目</text>
    <text x="34" y="187.400" font-family="Liberation Sans, sans-serif" font-size="3.900" fill="#8c8c8c" textLength="108" lengthAdjust="spacingAndGlyphs">Chinese Bridge Virtual Experience Program for Exploring</text>
    <text x="34" y="192.200" font-family="Liberation Sans, sans-serif" font-size="3.900" fill="#8c8c8c" textLength="90" lengthAdjust="spacingAndGlyphs">the Charm of Yellow River Civilization, Henan University</text>
    </g>
    <!-- pagoda -->
    <g fill="#dcd8cc" stroke="#6e6a62" stroke-width=".55">
      <path d="M25.800 187l1.400 3.500h-2.800z"></path><rect x="22.500" y="190.500" width="6.600" height="4"></rect><path d="M20.500 195.800h10.600l-1.300-1.600h-8z" fill="#8e8a80"></path><rect x="22" y="195.800" width="7.600" height="4.600"></rect><path d="M19.800 201.800h12l-1.300-1.600h-9.400z" fill="#8e8a80"></path><rect x="21.600" y="201.800" width="8.400" height="4.600"></rect><path d="M19.200 207.800h13.200l-1.300-1.600h-10.600z" fill="#8e8a80"></path><rect x="21.200" y="207.800" width="9.200" height="4.600"></rect><path d="M18.700 213.800h14.200l-1.300-1.600h-11.600z" fill="#8e8a80"></path><rect x="20.800" y="213.800" width="10" height="4.400"></rect>
    </g>
    <path d="M46 212l1.500 1l1.500-1M52 213.500l1.500 1l1.500-1M58 212.500l1.200.8l1.200-.8" stroke="#4a4a4a" stroke-width=".6" fill="none"></path>
    <!-- gate building -->
    <path d="M16 222c12-4 30-5 48-2l8 5h-56z" fill="#7f8a84"></path>
    <rect x="18" y="225" width="50" height="20" fill="#e4e1d6"></rect>
    <path d="M18 226h50v2h-50z" fill="#5f6e66"></path>
    <g stroke="#a7a49a" stroke-width="1"><path d="M24 228v17M31 228v17M38 228v17M45 228v17M52 228v17"></path></g>
    <path d="M20 233h46" stroke="#8a948c" stroke-width="1.200"></path>
    <rect x="16" y="222" width="5" height="10" fill="#c2402e"></rect>
    <path d="M54 231c5-2.500 13-2.500 20 0l2 3h-24z" fill="#6d7f8c"></path><rect x="56" y="234" width="17" height="11" fill="#e9dfc4"></rect><rect x="58" y="236" width="5" height="9" fill="#4f8a56"></rect><rect x="66" y="236" width="5" height="5" fill="#d7813a"></rect>
    <!-- person -->
    <path d="M73 245c2-4 7-6 12-6.500h22c5 .5 10 2.500 12 6.500z" fill="#efc3c2"></path>
    <path d="M77 213c-1.500-15 6.500-25.500 20-25.500s20.500 8.500 19 25c-.5 5 0 10 1 15s1.500 11 0 17h-9l-24-9.500c-3.500-6-5-14-6-22z" fill="#1c1715"></path>
    <path d="M80 215c0-10 6-16 15.500-16s15.500 6 15.500 16c0 14-6 29.500-15.500 29.500s-15.500-15.500-15.500-29.500z" fill="#e9c0a9"></path>
    <path d="M79.500 214c1-10.500 7-15 16-15s15 4.500 16 13.500c-3.500-5.500-8-8-14.500-8c-7 0-13 3-17.500 9.500z" fill="#221b18"></path>
    <path d="M84 226c2 8 6 14 11.500 16" stroke="#d9a992" stroke-width="2" fill="none" opacity=".6"></path>
    <ellipse cx="94" cy="231.500" rx="4" ry="2.200" fill="#4a2624"></ellipse><path d="M85 212.500h5M100.500 212.500h5" stroke="#33221d" stroke-width="1.100"></path><path d="M95 218v6.500" stroke="#d3a28c" stroke-width="1.200"></path>
    <!-- label -->
    <rect x="16" y="234" width="37" height="11" fill="#6e6e6e" opacity=".78"></rect>
    <text x="18" y="243" font-family="Liberation Sans, Noto Sans CJK SC, sans-serif" font-size="8.500" fill="#fff">会议 支持</text>
  </svg>
  <div class="nm" style="top: 192px; right: auto; left: 0px; width: 142px;">68 李金露</div>
  <div class="lb" style="top: 229px; right: auto; left: 1px; width: 50.39px;"><svg class="abs" style="left:2px;top:1px" width="10" height="10" viewBox="0 0 10 10"><rect x="3.600" y=".8" width="2.800" height="5" rx="1.400" fill="#e23b3b"></rect><path d="M2.200 4.500a2.800 2.800 0 0 0 5.600 0M5 7.300v1.700M3.300 9.200h3.400" fill="none" stroke="#e23b3b" stroke-width=".8"></path><path d="M8.300 .8L1.700 9" stroke="#e23b3b" stroke-width="1"></path></svg>68 李金露</div>
  <div class="nm" style="top: 272px; right: auto; left: 0px; width: 142px;">59. 段氏芳渊</div>
  <div class="lb" style="top: 308px; right: auto; left: 1px; width: 60.67px;"><svg class="abs" style="left:2px;top:1px" width="10" height="10" viewBox="0 0 10 10"><rect x="3.600" y=".8" width="2.800" height="5" rx="1.400" fill="#e23b3b"></rect><path d="M2.200 4.500a2.800 2.800 0 0 0 5.600 0M5 7.300v1.700M3.300 9.200h3.400" fill="none" stroke="#e23b3b" stroke-width=".8"></path><path d="M8.300 .8L1.700 9" stroke="#e23b3b" stroke-width="1"></path></svg>59. 段氏芳渊</div>
</div>
<!-- recording overlay -->
<div class="abs" style="left:5px;top:3px;width:62px;height:17px;background:rgba(20,20,20,.62);border-radius:2px">
  <svg class="abs" style="left:5px;top:3px" width="14" height="11" viewBox="0 0 14 11"><path d="M3.500 10a3 3 0 0 1-.4-6a4 4 0 0 1 7.600-.3a3.200 3.200 0 0 1-.2 6.300z" fill="#d9d9d9"></path><circle cx="7" cy="6" r="2.100" fill="#e04545"></circle></svg>
  <div class="t" style="left: 20.5px; top: 4.5px; color: rgb(236, 236, 236); font-size: 8.6px; letter-spacing: -0.4px; right: auto; width: 31.77px;">录制中...</div>
</div>
</div>


</body></html>
